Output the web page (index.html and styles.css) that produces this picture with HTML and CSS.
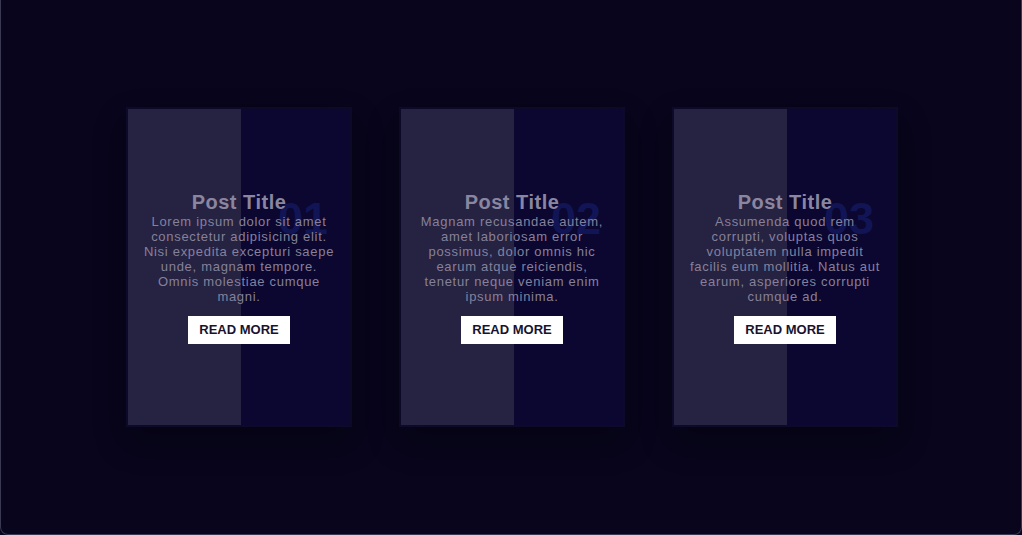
FILE: index.html
```html
<!DOCTYPE html>
<html lang="en">
<head>
<meta charset="utf-8">
<title>Posts</title>
<link rel="stylesheet" href="styles.css">
</head>
<body>
<div class="frame">
  <div class="cards">
    <div class="card">
      <span class="num">01</span>
      <div class="content">
        <h2 class="title">Post Title</h2>
        <p class="text">Lorem ipsum dolor sit amet consectetur adipisicing elit. Nisi expedita excepturi saepe unde, magnam tempore. Omnis molestiae cumque magni.</p>
        <a class="btn" href="#">READ MORE</a>
      </div>
    </div>
    <div class="card">
      <span class="num">02</span>
      <div class="content">
        <h2 class="title">Post Title</h2>
        <p class="text">Magnam recusandae autem, amet laboriosam error possimus, dolor omnis hic earum atque reiciendis, tenetur neque veniam enim ipsum minima.</p>
        <a class="btn" href="#">READ MORE</a>
      </div>
    </div>
    <div class="card">
      <span class="num">03</span>
      <div class="content">
        <h2 class="title">Post Title</h2>
        <p class="text">Assumenda quod rem corrupti, voluptas quos voluptatem nulla impedit facilis eum mollitia. Natus aut earum, asperiores corrupti cumque ad.</p>
        <a class="btn" href="#">READ MORE</a>
      </div>
    </div>
  </div>
</div>
</body>
</html>
```

FILE: styles.css
```css
* { box-sizing: border-box; }
html, body {
  margin: 0;
  padding: 0;
  background: #08051c;
  font-family: "Liberation Sans", Arial, sans-serif;
}
.frame {
  width: 1022px;
  height: 535px;
  border: 1px solid #3a3852;
  border-top: none;
  border-radius: 0 0 8px 8px;
  background: #08051c;
  display: flex;
  align-items: center;
  justify-content: center;
  padding-left: 2px;
}
.cards {
  display: flex;
  gap: 47px;
}
.card {
  position: relative;
  width: 226px;
  height: 320px;
  border: 2px solid #0d0a29;
  background: #0b0730;
  box-shadow: 0 15px 30px rgba(0, 0, 0, 0.3);
  display: flex;
  align-items: center;
  justify-content: center;
  padding: 0 13px;
  overflow: hidden;
}
.card::before {
  content: "";
  position: absolute;
  left: 0;
  top: 0;
  bottom: 0;
  width: 113px;
  background: #262241;
}
.num {
  position: absolute;
  top: 87px;
  right: 22px;
  font-size: 45px;
  line-height: 1;
  font-weight: bold;
  color: #111556;
}
.content {
  position: relative;
  text-align: center;
  display: flex;
  flex-direction: column;
  align-items: center;
}
.title {
  margin: 0;
  font-size: 20px;
  line-height: 23px;
  font-weight: bold;
  letter-spacing: 0.5px;
  color: #8a86a0;
}
.text {
  margin: 0 0 12px;
  font-size: 13px;
  line-height: 15px;
  letter-spacing: 0.7px;
  color: #85819c;
}
.btn {
  display: inline-block;
  background: #ffffff;
  color: #17132f;
  text-decoration: none;
  font-size: 13px;
  font-weight: bold;
  line-height: 16px;
  padding: 6px 11px;
}
```
